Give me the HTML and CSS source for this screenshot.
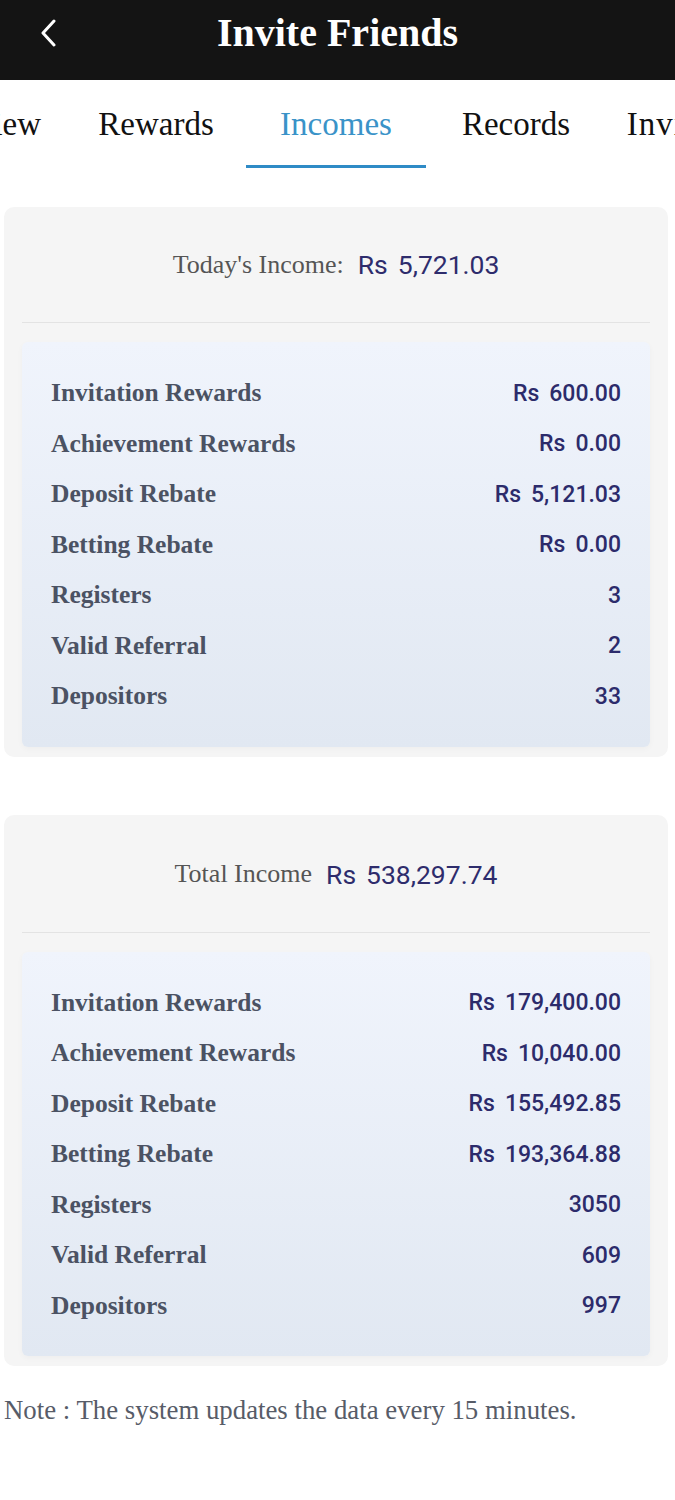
FILE: index.html
```
<!DOCTYPE html>
<html lang="en">

<head>
    <meta charset="UTF-8">
    <title>Invite Friends</title>
    <link rel="stylesheet" href="styles.css">
</head>

<body>
    <header class="topbar">
        <a class="back" href="#">
            <svg width="18" height="28" viewBox="0 0 18 28">
                <polyline points="14,2 3,14 14,26" fill="none" stroke="#fff" stroke-width="3" stroke-linecap="round" stroke-linejoin="round" />
            </svg>
        </a>
        <h1>Invite Friends</h1>
        <span></span>
    </header>

    <nav class="tabs">
        <div class="tab-track">
            <span class="tab">Overview</span>
            <span class="tab">Rewards</span>
            <span class="tab active">Incomes</span>
            <span class="tab">Records</span>
            <span class="tab wide">Invitation</span>
        </div>
    </nav>

    <div class="content">
        <!-- 今日收入 -->
        <section class="income-card">
            <div class="income-head">
                <span class="head-label">Today's Income:</span>
                <span class="head-value"><span class="cur">Rs</span>5,721.03</span>
            </div>
            <div class="income-list">
                <div class="row"><span class="row-label">Invitation Rewards</span><span class="row-value"><span class="cur">Rs</span>600.00</span></div>
                <div class="row"><span class="row-label">Achievement Rewards</span><span class="row-value"><span class="cur">Rs</span>0.00</span></div>
                <div class="row"><span class="row-label">Deposit Rebate</span><span class="row-value"><span class="cur">Rs</span>5,121.03</span></div>
                <div class="row"><span class="row-label">Betting Rebate</span><span class="row-value"><span class="cur">Rs</span>0.00</span></div>
                <div class="row"><span class="row-label">Registers</span><span class="row-value">3</span></div>
                <div class="row"><span class="row-label">Valid Referral</span><span class="row-value">2</span></div>
                <div class="row"><span class="row-label">Depositors</span><span class="row-value">33</span></div>
            </div>
        </section>

        <!-- 总收入 -->
        <section class="income-card total">
            <div class="income-head">
                <span class="head-label">Total Income</span>
                <span class="head-value"><span class="cur">Rs</span>538,297.74</span>
            </div>
            <div class="income-list">
                <div class="row"><span class="row-label">Invitation Rewards</span><span class="row-value"><span class="cur">Rs</span>179,400.00</span></div>
                <div class="row"><span class="row-label">Achievement Rewards</span><span class="row-value"><span class="cur">Rs</span>10,040.00</span></div>
                <div class="row"><span class="row-label">Deposit Rebate</span><span class="row-value"><span class="cur">Rs</span>155,492.85</span></div>
                <div class="row"><span class="row-label">Betting Rebate</span><span class="row-value"><span class="cur">Rs</span>193,364.88</span></div>
                <div class="row"><span class="row-label">Registers</span><span class="row-value">3050</span></div>
                <div class="row"><span class="row-label">Valid Referral</span><span class="row-value">609</span></div>
                <div class="row"><span class="row-label">Depositors</span><span class="row-value">997</span></div>
            </div>
        </section>

        <p class="note">Note : The system updates the data every 15 minutes.</p>
    </div>
</body>

</html>
```

FILE: styles.css
```
* {
    padding: 0;
    margin: 0;
    box-sizing: border-box;
}

body {
    background: #fff;
    font-family: "Liberation Serif", serif;
    overflow-x: hidden;
}

/* 顶部栏 */
.topbar {
    height: 80px;
    padding-bottom: 15px;
    background: #141414;
    display: grid;
    grid-template-columns: 1fr auto 1fr;
    align-items: center;
}

.back {
    display: flex;
    padding-left: 40px;
}

.topbar h1 {
    color: #fff;
    font-size: 40px;
    font-weight: bold;
    line-height: 44px;
}

/* 标签栏 */
.tabs {
    overflow: hidden;
    padding-bottom: 2px;
}

.tab-track {
    display: flex;
    transform: translateX(-114px);
}

.tab {
    flex: none;
    width: 180px;
    padding: 20px 0 17px;
    line-height: 48px;
    font-size: 33px;
    color: #111;
    text-align: center;
    white-space: nowrap;
    border-bottom: 3px solid transparent;
}

.tab.wide {
    letter-spacing: 1px;
}

.tab.active {
    color: #3a93c8;
    border-bottom-color: #2f8bc6;
}

/* 内容 */
.content {
    padding: 37px 7px 0 4px;
}

.income-card {
    background: #f5f5f5;
    border-radius: 10px;
    padding: 0 18px 10px;
    margin-bottom: 58px;
}

.income-card.total {
    margin-bottom: 0;
}

.income-head {
    height: 116px;
    display: flex;
    justify-content: center;
    align-items: center;
    border-bottom: 1px solid #e3e3e3;
    margin-bottom: 19px;
}

.total .income-head {
    height: 118px;
    padding-top: 2px;
}

.head-label {
    font-size: 26px;
    color: #555;
    margin-right: 14px;
}

.head-value {
    font-family: Roboto, sans-serif;
    font-size: 26.5px;
    color: #2e2c6c;
}

.cur {
    margin-right: 10px;
}

.income-list {
    background: linear-gradient(#f0f4fc, #e1e8f2);
    border-radius: 6px;
    padding: 26px 29px 25px;
    box-shadow: 0 2px 6px rgba(0, 0, 0, 0.03);
}

.row {
    display: flex;
    justify-content: space-between;
    align-items: center;
    height: 50.5px;
}

.row-label {
    font-size: 25.5px;
    font-weight: bold;
    color: #4b5263;
}

.row-value {
    font-family: Roboto, sans-serif;
    font-size: 23px;
    font-weight: 500;
    color: #2c2b6b;
}

.note {
    margin-top: 27px;
    font-size: 26.8px;
    line-height: 34px;
    color: #575c68;
}
```
